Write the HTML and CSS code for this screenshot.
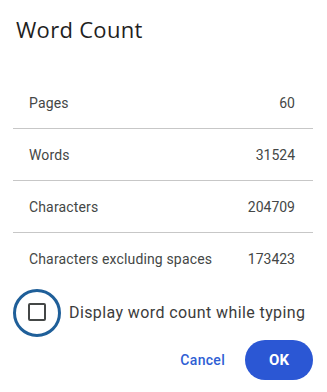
FILE: index.html
```html
<!DOCTYPE html>
<html>
<head>
<meta charset="utf-8">
<link rel="stylesheet" href="styles.css">
</head>
<body>
<div class="dialog">
  <h1 class="title">Word Count</h1>
  <div class="stats">
    <div class="row"><span class="label">Pages</span><span>60</span></div>
    <div class="row"><span class="label">Words</span><span>31524</span></div>
    <div class="row"><span class="label">Characters</span><span>204709</span></div>
    <div class="row"><span class="label">Characters excluding spaces</span><span>173423</span></div>
  </div>
  <label class="check">
    <span class="ring"><span class="box"></span></span>
    <span class="check-label">Display word count while typing</span>
  </label>
  <div class="actions">
    <button class="btn-text">Cancel</button>
    <button class="btn-primary">OK</button>
  </div>
</div>
</body>
</html>
```
FILE: styles.css
```css
html, body {
  margin: 0;
  padding: 0;
  background: #ffffff;
}
.dialog {
  width: 327px;
  height: 392px;
  box-sizing: border-box;
  padding: 14px 14px 0 13px;
  font-family: Roboto, "Liberation Sans", sans-serif;
}
.title {
  margin: 0 0 0 3px;
  font-family: "Open Sans", sans-serif;
  font-weight: 400;
  font-size: 22px;
  line-height: 30px;
  color: #1f1f1f;
  letter-spacing: 0.3px;
}
.stats {
  margin-top: 33px;
  width: 300px;
}
.row {
  height: 52px;
  display: flex;
  align-items: center;
  justify-content: space-between;
  padding: 0 18px 0 16px;
  font-size: 14px;
  color: #444746;
  border-bottom: 1px solid #c7c7c7;
  box-sizing: border-box;
}
.label {
  letter-spacing: 0.15px;
}
.row:last-child {
  border-bottom: none;
}
.check {
  display: flex;
  align-items: center;
  margin-top: 4px;
}
.ring {
  width: 48px;
  height: 48px;
  box-sizing: border-box;
  border: 3px solid #1f5f99;
  border-radius: 50%;
  display: flex;
  align-items: center;
  justify-content: center;
}
.box {
  width: 18px;
  height: 18px;
  box-sizing: border-box;
  border: 2px solid #444746;
  border-radius: 2px;
  margin-top: -3px;
}
.check-label {
  margin-left: 8px;
  font-size: 16px;
  color: #3c3c3c;
  letter-spacing: 0.4px;
  margin-top: -2px;
}
.actions {
  display: flex;
  justify-content: flex-end;
  align-items: center;
  margin-top: 3px;
  width: 300px;
  gap: 20px;
}
.btn-text {
  border: none;
  background: none;
  padding: 0;
  font-family: Roboto, sans-serif;
  font-weight: 500;
  font-size: 14px;
  letter-spacing: 0.3px;
  color: #2f5fd4;
}
.btn-primary {
  border: none;
  width: 68px;
  height: 40px;
  border-radius: 20px;
  background: #2b57d4;
  color: #ffffff;
  font-family: Roboto, sans-serif;
  font-weight: 700;
  font-size: 15px;
}
```
